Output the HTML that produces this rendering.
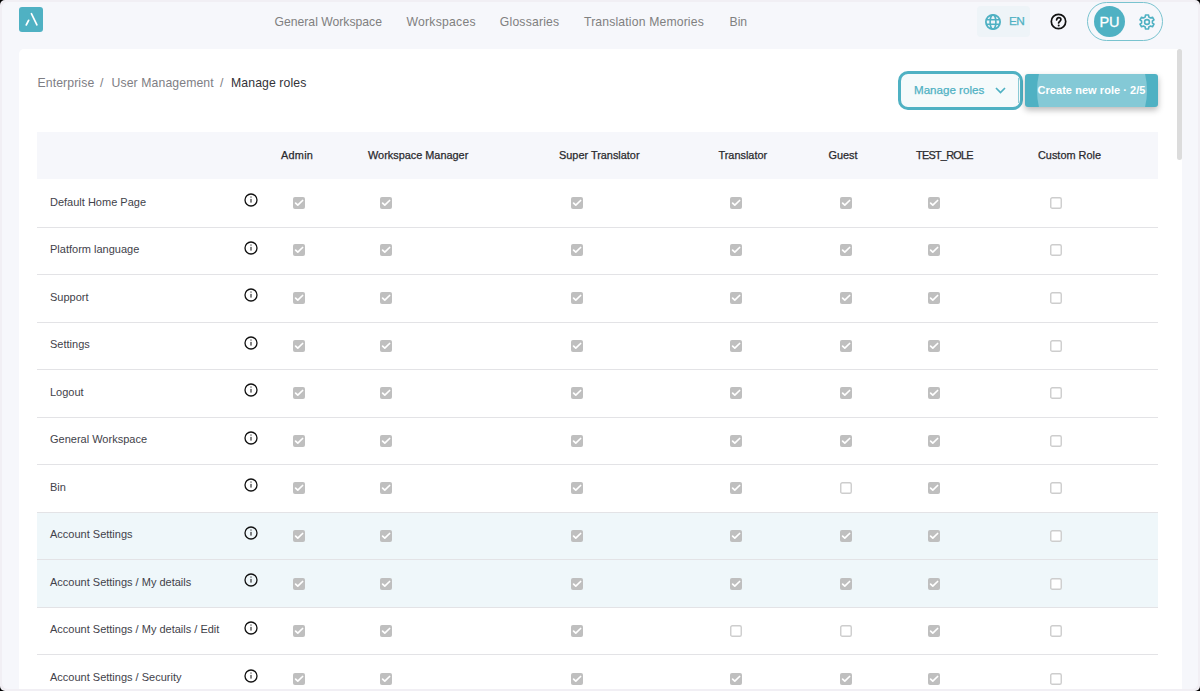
<!DOCTYPE html>
<html><head><meta charset="utf-8"><style>
*{margin:0;padding:0;box-sizing:border-box}
html,body{width:1200px;height:691px;overflow:hidden;background:#000;font-family:"Liberation Sans",sans-serif}
.frame{position:absolute;left:0;top:0;width:1200px;height:691px;border-radius:5px;background:#f1eff4;overflow:hidden}
.inner{position:absolute;left:2px;top:2px;right:2px;bottom:2px;border-radius:6px;background:#f6f7fb}
.abs{position:absolute}
.nav{position:absolute;top:13.7px;font-size:12.2px;color:#808080;white-space:nowrap;line-height:16px}
.card{position:absolute;left:19px;top:49px;width:1163px;height:640px;background:#fff;border-radius:5px 5px 0 0;overflow:hidden}
.bc{position:absolute;top:75px;font-size:12.25px;letter-spacing:0.1px;line-height:16px;white-space:nowrap;color:#7e7e84}
.thead{position:absolute;left:37px;top:132px;width:1121px;height:47px;background:#f6f7fb}
.th{position:absolute;top:148px;font-size:10.9px;line-height:14px;color:#2a2a2e;-webkit-text-stroke:0.25px #2a2a2e;white-space:nowrap}
.hl{position:absolute;left:37px;width:1121px;background:#eff7fa}
.line{position:absolute;left:37px;width:1121px;height:1px;background:#e3e3e6}
.rl{position:absolute;left:50px;font-size:11px;line-height:14px;color:#42424a;white-space:nowrap}
.ic{position:absolute;width:14px;height:14px}
.ic svg,.cb svg{display:block}
.cb{position:absolute;width:12px;height:12px}
</style></head><body>
<div class="frame"><div class="inner"></div></div>
<!-- header -->
<div class="abs" style="left:19px;top:7px;width:24px;height:25px;border-radius:3px;background:#4fb1c3">
<svg width="24" height="25" viewBox="0 0 24 25"><path d="M12.4 6.7 L17.9 17.8" stroke="#fff" stroke-width="1.7" stroke-linecap="round" fill="none"/><path d="M7.3 17.9 L9.6 13.4" stroke="#fff" stroke-width="1.8" stroke-linecap="round" fill="none"/></svg>
</div>
<div class="nav" style="left:274.5px">General Workspace</div>
<div class="nav" style="left:406.5px;letter-spacing:0.25px">Workspaces</div>
<div class="nav" style="left:499.8px;letter-spacing:0.2px">Glossaries</div>
<div class="nav" style="left:584px;letter-spacing:0.16px">Translation Memories</div>
<div class="nav" style="left:729.5px">Bin</div>

<div class="abs" style="left:977px;top:6px;width:53px;height:31px;border-radius:4px;background:#eef4f8"></div>
<svg class="abs" style="left:984px;top:12.5px" width="18" height="18" viewBox="0 0 18 18"><circle cx="9" cy="9" r="7.1" fill="none" stroke="#4fb1c3" stroke-width="1.8"/><ellipse cx="9" cy="9" rx="2.9" ry="7.1" fill="none" stroke="#4fb1c3" stroke-width="1.6"/><path d="M2.2 6.8H15.8M2.2 11.2H15.8" stroke="#4fb1c3" stroke-width="1.6"/></svg>
<div class="abs" style="left:1009px;top:14.3px;font-size:11.8px;line-height:14px;color:#4fb1c3;letter-spacing:-0.5px;-webkit-text-stroke:0.25px #4fb1c3">EN</div>

<svg class="abs" style="left:1050px;top:13px" width="17" height="17" viewBox="0 0 17 17"><circle cx="8.5" cy="8.5" r="7.2" fill="none" stroke="#111" stroke-width="1.7"/><path d="M6.6 6.9 C6.9 5.2 7.8 4.6 8.8 4.6 C10.1 4.6 11.0 5.5 10.9 6.6 C10.8 7.9 9.0 8.6 8.6 10.0" fill="none" stroke="#111" stroke-width="1.7" stroke-linecap="round"/><circle cx="8.7" cy="12.4" r="1" fill="#111"/></svg>

<div class="abs" style="left:1087px;top:2px;width:76px;height:39px;border-radius:20px;border:1px solid #79c3cf"></div>
<div class="abs" style="left:1094px;top:6px;width:31px;height:31px;border-radius:50%;background:#4fb1c3;color:#fff;font-size:14.5px;line-height:33px;text-align:center;-webkit-text-stroke:0.3px #fff">PU</div>
<svg class="abs" style="left:1138px;top:12.6px" width="18" height="18" viewBox="0 0 18 18"><path fill="none" stroke="#4fb1c3" stroke-width="1.6" stroke-linejoin="round" d="M10.79 3.99 L10.54 2.06 L7.46 2.06 L7.21 3.99 L5.38 5.00 L3.51 4.25 L1.98 6.81 L3.59 7.99 L3.59 10.01 L1.98 11.19 L3.51 13.75 L5.38 13.00 L7.21 14.01 L7.46 15.94 L10.54 15.94 L10.79 14.01 L12.62 13.00 L14.49 13.75 L16.02 11.19 L14.41 10.01 L14.41 7.99 L16.02 6.81 L14.49 4.25 L12.62 5.00Z"/><circle cx="9" cy="9" r="2.4" fill="none" stroke="#4fb1c3" stroke-width="1.6"/></svg>

<!-- card -->
<div class="card"></div>
<div class="abs" style="left:1177px;top:49px;width:5px;height:111px;border-radius:3px;background:#dcdcdc"></div>

<div class="bc" style="left:37.5px">Enterprise</div>
<div class="bc" style="left:100px">/</div>
<div class="bc" style="left:111.5px">User Management</div>
<div class="bc" style="left:220px">/</div>
<div class="bc" style="left:231px;color:#333338">Manage roles</div>

<!-- buttons -->
<div class="abs" style="left:898px;top:71px;width:125px;height:39px;border-radius:10px;border:3.8px solid #4fb1c3;background:#f5fafb"></div>
<div class="abs" style="left:1018px;top:78px;width:1px;height:25px;background:#8ccbd6"></div>
<div class="abs" style="left:914px;top:83px;font-size:11.6px;line-height:14px;color:#4fb1c3;-webkit-text-stroke:0.25px #4fb1c3;white-space:nowrap">Manage roles</div>
<svg class="abs" style="left:995px;top:87px" width="11" height="7" viewBox="0 0 11 7"><path d="M1 1 L5.5 5.5 L10 1" fill="none" stroke="#4fb1c3" stroke-width="1.7"/></svg>

<div class="abs" style="left:1025px;top:74px;width:133px;height:33px;border-radius:3px;background:#4fb1c3;overflow:hidden;box-shadow:0 3px 6px rgba(0,0,0,0.28)">
<div class="abs" style="left:11.8px;top:-45px;width:110.5px;height:123px;border-radius:50%;background:#84c9d6"></div>
<div class="abs" style="left:12.5px;top:9px;font-size:11px;line-height:14px;font-weight:bold;letter-spacing:0.05px;color:#fff;white-space:nowrap">Create new role · 2/5</div>
</div>

<div class="thead"></div>
<div class="th" style="left:281px;letter-spacing:0.25px">Admin</div><div class="th" style="left:368px">Workspace Manager</div><div class="th" style="left:559px">Super Translator</div><div class="th" style="left:718.5px">Translator</div><div class="th" style="left:828.5px">Guest</div><div class="th" style="left:916px;letter-spacing:-0.75px">TEST_ROLE</div><div class="th" style="left:1038px">Custom Role</div>
<div class="hl" style="top:511.5px;height:47.5px"></div>
<div class="hl" style="top:559.0px;height:47.5px"></div>
<div class="line" style="top:226.5px"></div>
<div class="rl" style="top:194.8px">Default Home Page</div>
<div class="ic" style="left:244px;top:193.00px"><svg width="14" height="14" viewBox="0 0 14 14"><circle cx="7" cy="7" r="6.0" fill="none" stroke="#111" stroke-width="1.3"/><rect x="6.45" y="3.5" width="1.1" height="1.1" fill="#222"/><rect x="6.45" y="5.9" width="1.1" height="3.7" fill="#222"/></svg></div>
<div class="cb" style="left:292.8px;top:196.90px"><svg width="12" height="12" viewBox="0 0 12 12"><rect x="0" y="0" width="12" height="12" rx="2" fill="#bfbfbf"/><path d="M2.6 6.1 L4.8 8.2 L9.6 3.5" fill="none" stroke="#fff" stroke-width="1.7" stroke-linecap="round" stroke-linejoin="round"/></svg></div>
<div class="cb" style="left:379.8px;top:196.90px"><svg width="12" height="12" viewBox="0 0 12 12"><rect x="0" y="0" width="12" height="12" rx="2" fill="#bfbfbf"/><path d="M2.6 6.1 L4.8 8.2 L9.6 3.5" fill="none" stroke="#fff" stroke-width="1.7" stroke-linecap="round" stroke-linejoin="round"/></svg></div>
<div class="cb" style="left:570.8px;top:196.90px"><svg width="12" height="12" viewBox="0 0 12 12"><rect x="0" y="0" width="12" height="12" rx="2" fill="#bfbfbf"/><path d="M2.6 6.1 L4.8 8.2 L9.6 3.5" fill="none" stroke="#fff" stroke-width="1.7" stroke-linecap="round" stroke-linejoin="round"/></svg></div>
<div class="cb" style="left:730.3px;top:196.90px"><svg width="12" height="12" viewBox="0 0 12 12"><rect x="0" y="0" width="12" height="12" rx="2" fill="#bfbfbf"/><path d="M2.6 6.1 L4.8 8.2 L9.6 3.5" fill="none" stroke="#fff" stroke-width="1.7" stroke-linecap="round" stroke-linejoin="round"/></svg></div>
<div class="cb" style="left:840.3px;top:196.90px"><svg width="12" height="12" viewBox="0 0 12 12"><rect x="0" y="0" width="12" height="12" rx="2" fill="#bfbfbf"/><path d="M2.6 6.1 L4.8 8.2 L9.6 3.5" fill="none" stroke="#fff" stroke-width="1.7" stroke-linecap="round" stroke-linejoin="round"/></svg></div>
<div class="cb" style="left:927.8px;top:196.90px"><svg width="12" height="12" viewBox="0 0 12 12"><rect x="0" y="0" width="12" height="12" rx="2" fill="#bfbfbf"/><path d="M2.6 6.1 L4.8 8.2 L9.6 3.5" fill="none" stroke="#fff" stroke-width="1.7" stroke-linecap="round" stroke-linejoin="round"/></svg></div>
<div class="cb" style="left:1049.8px;top:196.90px"><svg width="12" height="12" viewBox="0 0 12 12"><rect x="0.75" y="0.75" width="10.5" height="10.5" rx="1.6" fill="#fff" stroke="#cdcdcd" stroke-width="1.4"/></svg></div>
<div class="line" style="top:274.0px"></div>
<div class="rl" style="top:242.3px">Platform language</div>
<div class="ic" style="left:244px;top:240.55px"><svg width="14" height="14" viewBox="0 0 14 14"><circle cx="7" cy="7" r="6.0" fill="none" stroke="#111" stroke-width="1.3"/><rect x="6.45" y="3.5" width="1.1" height="1.1" fill="#222"/><rect x="6.45" y="5.9" width="1.1" height="3.7" fill="#222"/></svg></div>
<div class="cb" style="left:292.8px;top:244.48px"><svg width="12" height="12" viewBox="0 0 12 12"><rect x="0" y="0" width="12" height="12" rx="2" fill="#bfbfbf"/><path d="M2.6 6.1 L4.8 8.2 L9.6 3.5" fill="none" stroke="#fff" stroke-width="1.7" stroke-linecap="round" stroke-linejoin="round"/></svg></div>
<div class="cb" style="left:379.8px;top:244.48px"><svg width="12" height="12" viewBox="0 0 12 12"><rect x="0" y="0" width="12" height="12" rx="2" fill="#bfbfbf"/><path d="M2.6 6.1 L4.8 8.2 L9.6 3.5" fill="none" stroke="#fff" stroke-width="1.7" stroke-linecap="round" stroke-linejoin="round"/></svg></div>
<div class="cb" style="left:570.8px;top:244.48px"><svg width="12" height="12" viewBox="0 0 12 12"><rect x="0" y="0" width="12" height="12" rx="2" fill="#bfbfbf"/><path d="M2.6 6.1 L4.8 8.2 L9.6 3.5" fill="none" stroke="#fff" stroke-width="1.7" stroke-linecap="round" stroke-linejoin="round"/></svg></div>
<div class="cb" style="left:730.3px;top:244.48px"><svg width="12" height="12" viewBox="0 0 12 12"><rect x="0" y="0" width="12" height="12" rx="2" fill="#bfbfbf"/><path d="M2.6 6.1 L4.8 8.2 L9.6 3.5" fill="none" stroke="#fff" stroke-width="1.7" stroke-linecap="round" stroke-linejoin="round"/></svg></div>
<div class="cb" style="left:840.3px;top:244.48px"><svg width="12" height="12" viewBox="0 0 12 12"><rect x="0" y="0" width="12" height="12" rx="2" fill="#bfbfbf"/><path d="M2.6 6.1 L4.8 8.2 L9.6 3.5" fill="none" stroke="#fff" stroke-width="1.7" stroke-linecap="round" stroke-linejoin="round"/></svg></div>
<div class="cb" style="left:927.8px;top:244.48px"><svg width="12" height="12" viewBox="0 0 12 12"><rect x="0" y="0" width="12" height="12" rx="2" fill="#bfbfbf"/><path d="M2.6 6.1 L4.8 8.2 L9.6 3.5" fill="none" stroke="#fff" stroke-width="1.7" stroke-linecap="round" stroke-linejoin="round"/></svg></div>
<div class="cb" style="left:1049.8px;top:244.48px"><svg width="12" height="12" viewBox="0 0 12 12"><rect x="0.75" y="0.75" width="10.5" height="10.5" rx="1.6" fill="#fff" stroke="#cdcdcd" stroke-width="1.4"/></svg></div>
<div class="line" style="top:321.5px"></div>
<div class="rl" style="top:289.8px">Support</div>
<div class="ic" style="left:244px;top:288.10px"><svg width="14" height="14" viewBox="0 0 14 14"><circle cx="7" cy="7" r="6.0" fill="none" stroke="#111" stroke-width="1.3"/><rect x="6.45" y="3.5" width="1.1" height="1.1" fill="#222"/><rect x="6.45" y="5.9" width="1.1" height="3.7" fill="#222"/></svg></div>
<div class="cb" style="left:292.8px;top:292.06px"><svg width="12" height="12" viewBox="0 0 12 12"><rect x="0" y="0" width="12" height="12" rx="2" fill="#bfbfbf"/><path d="M2.6 6.1 L4.8 8.2 L9.6 3.5" fill="none" stroke="#fff" stroke-width="1.7" stroke-linecap="round" stroke-linejoin="round"/></svg></div>
<div class="cb" style="left:379.8px;top:292.06px"><svg width="12" height="12" viewBox="0 0 12 12"><rect x="0" y="0" width="12" height="12" rx="2" fill="#bfbfbf"/><path d="M2.6 6.1 L4.8 8.2 L9.6 3.5" fill="none" stroke="#fff" stroke-width="1.7" stroke-linecap="round" stroke-linejoin="round"/></svg></div>
<div class="cb" style="left:570.8px;top:292.06px"><svg width="12" height="12" viewBox="0 0 12 12"><rect x="0" y="0" width="12" height="12" rx="2" fill="#bfbfbf"/><path d="M2.6 6.1 L4.8 8.2 L9.6 3.5" fill="none" stroke="#fff" stroke-width="1.7" stroke-linecap="round" stroke-linejoin="round"/></svg></div>
<div class="cb" style="left:730.3px;top:292.06px"><svg width="12" height="12" viewBox="0 0 12 12"><rect x="0" y="0" width="12" height="12" rx="2" fill="#bfbfbf"/><path d="M2.6 6.1 L4.8 8.2 L9.6 3.5" fill="none" stroke="#fff" stroke-width="1.7" stroke-linecap="round" stroke-linejoin="round"/></svg></div>
<div class="cb" style="left:840.3px;top:292.06px"><svg width="12" height="12" viewBox="0 0 12 12"><rect x="0" y="0" width="12" height="12" rx="2" fill="#bfbfbf"/><path d="M2.6 6.1 L4.8 8.2 L9.6 3.5" fill="none" stroke="#fff" stroke-width="1.7" stroke-linecap="round" stroke-linejoin="round"/></svg></div>
<div class="cb" style="left:927.8px;top:292.06px"><svg width="12" height="12" viewBox="0 0 12 12"><rect x="0" y="0" width="12" height="12" rx="2" fill="#bfbfbf"/><path d="M2.6 6.1 L4.8 8.2 L9.6 3.5" fill="none" stroke="#fff" stroke-width="1.7" stroke-linecap="round" stroke-linejoin="round"/></svg></div>
<div class="cb" style="left:1049.8px;top:292.06px"><svg width="12" height="12" viewBox="0 0 12 12"><rect x="0.75" y="0.75" width="10.5" height="10.5" rx="1.6" fill="#fff" stroke="#cdcdcd" stroke-width="1.4"/></svg></div>
<div class="line" style="top:369.0px"></div>
<div class="rl" style="top:337.3px">Settings</div>
<div class="ic" style="left:244px;top:335.65px"><svg width="14" height="14" viewBox="0 0 14 14"><circle cx="7" cy="7" r="6.0" fill="none" stroke="#111" stroke-width="1.3"/><rect x="6.45" y="3.5" width="1.1" height="1.1" fill="#222"/><rect x="6.45" y="5.9" width="1.1" height="3.7" fill="#222"/></svg></div>
<div class="cb" style="left:292.8px;top:339.64px"><svg width="12" height="12" viewBox="0 0 12 12"><rect x="0" y="0" width="12" height="12" rx="2" fill="#bfbfbf"/><path d="M2.6 6.1 L4.8 8.2 L9.6 3.5" fill="none" stroke="#fff" stroke-width="1.7" stroke-linecap="round" stroke-linejoin="round"/></svg></div>
<div class="cb" style="left:379.8px;top:339.64px"><svg width="12" height="12" viewBox="0 0 12 12"><rect x="0" y="0" width="12" height="12" rx="2" fill="#bfbfbf"/><path d="M2.6 6.1 L4.8 8.2 L9.6 3.5" fill="none" stroke="#fff" stroke-width="1.7" stroke-linecap="round" stroke-linejoin="round"/></svg></div>
<div class="cb" style="left:570.8px;top:339.64px"><svg width="12" height="12" viewBox="0 0 12 12"><rect x="0" y="0" width="12" height="12" rx="2" fill="#bfbfbf"/><path d="M2.6 6.1 L4.8 8.2 L9.6 3.5" fill="none" stroke="#fff" stroke-width="1.7" stroke-linecap="round" stroke-linejoin="round"/></svg></div>
<div class="cb" style="left:730.3px;top:339.64px"><svg width="12" height="12" viewBox="0 0 12 12"><rect x="0" y="0" width="12" height="12" rx="2" fill="#bfbfbf"/><path d="M2.6 6.1 L4.8 8.2 L9.6 3.5" fill="none" stroke="#fff" stroke-width="1.7" stroke-linecap="round" stroke-linejoin="round"/></svg></div>
<div class="cb" style="left:840.3px;top:339.64px"><svg width="12" height="12" viewBox="0 0 12 12"><rect x="0" y="0" width="12" height="12" rx="2" fill="#bfbfbf"/><path d="M2.6 6.1 L4.8 8.2 L9.6 3.5" fill="none" stroke="#fff" stroke-width="1.7" stroke-linecap="round" stroke-linejoin="round"/></svg></div>
<div class="cb" style="left:927.8px;top:339.64px"><svg width="12" height="12" viewBox="0 0 12 12"><rect x="0" y="0" width="12" height="12" rx="2" fill="#bfbfbf"/><path d="M2.6 6.1 L4.8 8.2 L9.6 3.5" fill="none" stroke="#fff" stroke-width="1.7" stroke-linecap="round" stroke-linejoin="round"/></svg></div>
<div class="cb" style="left:1049.8px;top:339.64px"><svg width="12" height="12" viewBox="0 0 12 12"><rect x="0.75" y="0.75" width="10.5" height="10.5" rx="1.6" fill="#fff" stroke="#cdcdcd" stroke-width="1.4"/></svg></div>
<div class="line" style="top:416.5px"></div>
<div class="rl" style="top:384.8px">Logout</div>
<div class="ic" style="left:244px;top:383.20px"><svg width="14" height="14" viewBox="0 0 14 14"><circle cx="7" cy="7" r="6.0" fill="none" stroke="#111" stroke-width="1.3"/><rect x="6.45" y="3.5" width="1.1" height="1.1" fill="#222"/><rect x="6.45" y="5.9" width="1.1" height="3.7" fill="#222"/></svg></div>
<div class="cb" style="left:292.8px;top:387.22px"><svg width="12" height="12" viewBox="0 0 12 12"><rect x="0" y="0" width="12" height="12" rx="2" fill="#bfbfbf"/><path d="M2.6 6.1 L4.8 8.2 L9.6 3.5" fill="none" stroke="#fff" stroke-width="1.7" stroke-linecap="round" stroke-linejoin="round"/></svg></div>
<div class="cb" style="left:379.8px;top:387.22px"><svg width="12" height="12" viewBox="0 0 12 12"><rect x="0" y="0" width="12" height="12" rx="2" fill="#bfbfbf"/><path d="M2.6 6.1 L4.8 8.2 L9.6 3.5" fill="none" stroke="#fff" stroke-width="1.7" stroke-linecap="round" stroke-linejoin="round"/></svg></div>
<div class="cb" style="left:570.8px;top:387.22px"><svg width="12" height="12" viewBox="0 0 12 12"><rect x="0" y="0" width="12" height="12" rx="2" fill="#bfbfbf"/><path d="M2.6 6.1 L4.8 8.2 L9.6 3.5" fill="none" stroke="#fff" stroke-width="1.7" stroke-linecap="round" stroke-linejoin="round"/></svg></div>
<div class="cb" style="left:730.3px;top:387.22px"><svg width="12" height="12" viewBox="0 0 12 12"><rect x="0" y="0" width="12" height="12" rx="2" fill="#bfbfbf"/><path d="M2.6 6.1 L4.8 8.2 L9.6 3.5" fill="none" stroke="#fff" stroke-width="1.7" stroke-linecap="round" stroke-linejoin="round"/></svg></div>
<div class="cb" style="left:840.3px;top:387.22px"><svg width="12" height="12" viewBox="0 0 12 12"><rect x="0" y="0" width="12" height="12" rx="2" fill="#bfbfbf"/><path d="M2.6 6.1 L4.8 8.2 L9.6 3.5" fill="none" stroke="#fff" stroke-width="1.7" stroke-linecap="round" stroke-linejoin="round"/></svg></div>
<div class="cb" style="left:927.8px;top:387.22px"><svg width="12" height="12" viewBox="0 0 12 12"><rect x="0" y="0" width="12" height="12" rx="2" fill="#bfbfbf"/><path d="M2.6 6.1 L4.8 8.2 L9.6 3.5" fill="none" stroke="#fff" stroke-width="1.7" stroke-linecap="round" stroke-linejoin="round"/></svg></div>
<div class="cb" style="left:1049.8px;top:387.22px"><svg width="12" height="12" viewBox="0 0 12 12"><rect x="0.75" y="0.75" width="10.5" height="10.5" rx="1.6" fill="#fff" stroke="#cdcdcd" stroke-width="1.4"/></svg></div>
<div class="line" style="top:464.0px"></div>
<div class="rl" style="top:432.3px">General Workspace</div>
<div class="ic" style="left:244px;top:430.75px"><svg width="14" height="14" viewBox="0 0 14 14"><circle cx="7" cy="7" r="6.0" fill="none" stroke="#111" stroke-width="1.3"/><rect x="6.45" y="3.5" width="1.1" height="1.1" fill="#222"/><rect x="6.45" y="5.9" width="1.1" height="3.7" fill="#222"/></svg></div>
<div class="cb" style="left:292.8px;top:434.80px"><svg width="12" height="12" viewBox="0 0 12 12"><rect x="0" y="0" width="12" height="12" rx="2" fill="#bfbfbf"/><path d="M2.6 6.1 L4.8 8.2 L9.6 3.5" fill="none" stroke="#fff" stroke-width="1.7" stroke-linecap="round" stroke-linejoin="round"/></svg></div>
<div class="cb" style="left:379.8px;top:434.80px"><svg width="12" height="12" viewBox="0 0 12 12"><rect x="0" y="0" width="12" height="12" rx="2" fill="#bfbfbf"/><path d="M2.6 6.1 L4.8 8.2 L9.6 3.5" fill="none" stroke="#fff" stroke-width="1.7" stroke-linecap="round" stroke-linejoin="round"/></svg></div>
<div class="cb" style="left:570.8px;top:434.80px"><svg width="12" height="12" viewBox="0 0 12 12"><rect x="0" y="0" width="12" height="12" rx="2" fill="#bfbfbf"/><path d="M2.6 6.1 L4.8 8.2 L9.6 3.5" fill="none" stroke="#fff" stroke-width="1.7" stroke-linecap="round" stroke-linejoin="round"/></svg></div>
<div class="cb" style="left:730.3px;top:434.80px"><svg width="12" height="12" viewBox="0 0 12 12"><rect x="0" y="0" width="12" height="12" rx="2" fill="#bfbfbf"/><path d="M2.6 6.1 L4.8 8.2 L9.6 3.5" fill="none" stroke="#fff" stroke-width="1.7" stroke-linecap="round" stroke-linejoin="round"/></svg></div>
<div class="cb" style="left:840.3px;top:434.80px"><svg width="12" height="12" viewBox="0 0 12 12"><rect x="0" y="0" width="12" height="12" rx="2" fill="#bfbfbf"/><path d="M2.6 6.1 L4.8 8.2 L9.6 3.5" fill="none" stroke="#fff" stroke-width="1.7" stroke-linecap="round" stroke-linejoin="round"/></svg></div>
<div class="cb" style="left:927.8px;top:434.80px"><svg width="12" height="12" viewBox="0 0 12 12"><rect x="0" y="0" width="12" height="12" rx="2" fill="#bfbfbf"/><path d="M2.6 6.1 L4.8 8.2 L9.6 3.5" fill="none" stroke="#fff" stroke-width="1.7" stroke-linecap="round" stroke-linejoin="round"/></svg></div>
<div class="cb" style="left:1049.8px;top:434.80px"><svg width="12" height="12" viewBox="0 0 12 12"><rect x="0.75" y="0.75" width="10.5" height="10.5" rx="1.6" fill="#fff" stroke="#cdcdcd" stroke-width="1.4"/></svg></div>
<div class="line" style="top:511.5px"></div>
<div class="rl" style="top:479.8px">Bin</div>
<div class="ic" style="left:244px;top:478.30px"><svg width="14" height="14" viewBox="0 0 14 14"><circle cx="7" cy="7" r="6.0" fill="none" stroke="#111" stroke-width="1.3"/><rect x="6.45" y="3.5" width="1.1" height="1.1" fill="#222"/><rect x="6.45" y="5.9" width="1.1" height="3.7" fill="#222"/></svg></div>
<div class="cb" style="left:292.8px;top:482.38px"><svg width="12" height="12" viewBox="0 0 12 12"><rect x="0" y="0" width="12" height="12" rx="2" fill="#bfbfbf"/><path d="M2.6 6.1 L4.8 8.2 L9.6 3.5" fill="none" stroke="#fff" stroke-width="1.7" stroke-linecap="round" stroke-linejoin="round"/></svg></div>
<div class="cb" style="left:379.8px;top:482.38px"><svg width="12" height="12" viewBox="0 0 12 12"><rect x="0" y="0" width="12" height="12" rx="2" fill="#bfbfbf"/><path d="M2.6 6.1 L4.8 8.2 L9.6 3.5" fill="none" stroke="#fff" stroke-width="1.7" stroke-linecap="round" stroke-linejoin="round"/></svg></div>
<div class="cb" style="left:570.8px;top:482.38px"><svg width="12" height="12" viewBox="0 0 12 12"><rect x="0" y="0" width="12" height="12" rx="2" fill="#bfbfbf"/><path d="M2.6 6.1 L4.8 8.2 L9.6 3.5" fill="none" stroke="#fff" stroke-width="1.7" stroke-linecap="round" stroke-linejoin="round"/></svg></div>
<div class="cb" style="left:730.3px;top:482.38px"><svg width="12" height="12" viewBox="0 0 12 12"><rect x="0" y="0" width="12" height="12" rx="2" fill="#bfbfbf"/><path d="M2.6 6.1 L4.8 8.2 L9.6 3.5" fill="none" stroke="#fff" stroke-width="1.7" stroke-linecap="round" stroke-linejoin="round"/></svg></div>
<div class="cb" style="left:840.3px;top:482.38px"><svg width="12" height="12" viewBox="0 0 12 12"><rect x="0.75" y="0.75" width="10.5" height="10.5" rx="1.6" fill="#fff" stroke="#cdcdcd" stroke-width="1.4"/></svg></div>
<div class="cb" style="left:927.8px;top:482.38px"><svg width="12" height="12" viewBox="0 0 12 12"><rect x="0" y="0" width="12" height="12" rx="2" fill="#bfbfbf"/><path d="M2.6 6.1 L4.8 8.2 L9.6 3.5" fill="none" stroke="#fff" stroke-width="1.7" stroke-linecap="round" stroke-linejoin="round"/></svg></div>
<div class="cb" style="left:1049.8px;top:482.38px"><svg width="12" height="12" viewBox="0 0 12 12"><rect x="0.75" y="0.75" width="10.5" height="10.5" rx="1.6" fill="#fff" stroke="#cdcdcd" stroke-width="1.4"/></svg></div>
<div class="line" style="top:559.0px"></div>
<div class="rl" style="top:527.3px">Account Settings</div>
<div class="ic" style="left:244px;top:525.85px"><svg width="14" height="14" viewBox="0 0 14 14"><circle cx="7" cy="7" r="6.0" fill="none" stroke="#111" stroke-width="1.3"/><rect x="6.45" y="3.5" width="1.1" height="1.1" fill="#222"/><rect x="6.45" y="5.9" width="1.1" height="3.7" fill="#222"/></svg></div>
<div class="cb" style="left:292.8px;top:529.96px"><svg width="12" height="12" viewBox="0 0 12 12"><rect x="0" y="0" width="12" height="12" rx="2" fill="#bfbfbf"/><path d="M2.6 6.1 L4.8 8.2 L9.6 3.5" fill="none" stroke="#fff" stroke-width="1.7" stroke-linecap="round" stroke-linejoin="round"/></svg></div>
<div class="cb" style="left:379.8px;top:529.96px"><svg width="12" height="12" viewBox="0 0 12 12"><rect x="0" y="0" width="12" height="12" rx="2" fill="#bfbfbf"/><path d="M2.6 6.1 L4.8 8.2 L9.6 3.5" fill="none" stroke="#fff" stroke-width="1.7" stroke-linecap="round" stroke-linejoin="round"/></svg></div>
<div class="cb" style="left:570.8px;top:529.96px"><svg width="12" height="12" viewBox="0 0 12 12"><rect x="0" y="0" width="12" height="12" rx="2" fill="#bfbfbf"/><path d="M2.6 6.1 L4.8 8.2 L9.6 3.5" fill="none" stroke="#fff" stroke-width="1.7" stroke-linecap="round" stroke-linejoin="round"/></svg></div>
<div class="cb" style="left:730.3px;top:529.96px"><svg width="12" height="12" viewBox="0 0 12 12"><rect x="0" y="0" width="12" height="12" rx="2" fill="#bfbfbf"/><path d="M2.6 6.1 L4.8 8.2 L9.6 3.5" fill="none" stroke="#fff" stroke-width="1.7" stroke-linecap="round" stroke-linejoin="round"/></svg></div>
<div class="cb" style="left:840.3px;top:529.96px"><svg width="12" height="12" viewBox="0 0 12 12"><rect x="0" y="0" width="12" height="12" rx="2" fill="#bfbfbf"/><path d="M2.6 6.1 L4.8 8.2 L9.6 3.5" fill="none" stroke="#fff" stroke-width="1.7" stroke-linecap="round" stroke-linejoin="round"/></svg></div>
<div class="cb" style="left:927.8px;top:529.96px"><svg width="12" height="12" viewBox="0 0 12 12"><rect x="0" y="0" width="12" height="12" rx="2" fill="#bfbfbf"/><path d="M2.6 6.1 L4.8 8.2 L9.6 3.5" fill="none" stroke="#fff" stroke-width="1.7" stroke-linecap="round" stroke-linejoin="round"/></svg></div>
<div class="cb" style="left:1049.8px;top:529.96px"><svg width="12" height="12" viewBox="0 0 12 12"><rect x="0.75" y="0.75" width="10.5" height="10.5" rx="1.6" fill="#fff" stroke="#cdcdcd" stroke-width="1.4"/></svg></div>
<div class="line" style="top:606.5px"></div>
<div class="rl" style="top:574.8px">Account Settings / My details</div>
<div class="ic" style="left:244px;top:573.40px"><svg width="14" height="14" viewBox="0 0 14 14"><circle cx="7" cy="7" r="6.0" fill="none" stroke="#111" stroke-width="1.3"/><rect x="6.45" y="3.5" width="1.1" height="1.1" fill="#222"/><rect x="6.45" y="5.9" width="1.1" height="3.7" fill="#222"/></svg></div>
<div class="cb" style="left:292.8px;top:577.54px"><svg width="12" height="12" viewBox="0 0 12 12"><rect x="0" y="0" width="12" height="12" rx="2" fill="#bfbfbf"/><path d="M2.6 6.1 L4.8 8.2 L9.6 3.5" fill="none" stroke="#fff" stroke-width="1.7" stroke-linecap="round" stroke-linejoin="round"/></svg></div>
<div class="cb" style="left:379.8px;top:577.54px"><svg width="12" height="12" viewBox="0 0 12 12"><rect x="0" y="0" width="12" height="12" rx="2" fill="#bfbfbf"/><path d="M2.6 6.1 L4.8 8.2 L9.6 3.5" fill="none" stroke="#fff" stroke-width="1.7" stroke-linecap="round" stroke-linejoin="round"/></svg></div>
<div class="cb" style="left:570.8px;top:577.54px"><svg width="12" height="12" viewBox="0 0 12 12"><rect x="0" y="0" width="12" height="12" rx="2" fill="#bfbfbf"/><path d="M2.6 6.1 L4.8 8.2 L9.6 3.5" fill="none" stroke="#fff" stroke-width="1.7" stroke-linecap="round" stroke-linejoin="round"/></svg></div>
<div class="cb" style="left:730.3px;top:577.54px"><svg width="12" height="12" viewBox="0 0 12 12"><rect x="0" y="0" width="12" height="12" rx="2" fill="#bfbfbf"/><path d="M2.6 6.1 L4.8 8.2 L9.6 3.5" fill="none" stroke="#fff" stroke-width="1.7" stroke-linecap="round" stroke-linejoin="round"/></svg></div>
<div class="cb" style="left:840.3px;top:577.54px"><svg width="12" height="12" viewBox="0 0 12 12"><rect x="0" y="0" width="12" height="12" rx="2" fill="#bfbfbf"/><path d="M2.6 6.1 L4.8 8.2 L9.6 3.5" fill="none" stroke="#fff" stroke-width="1.7" stroke-linecap="round" stroke-linejoin="round"/></svg></div>
<div class="cb" style="left:927.8px;top:577.54px"><svg width="12" height="12" viewBox="0 0 12 12"><rect x="0" y="0" width="12" height="12" rx="2" fill="#bfbfbf"/><path d="M2.6 6.1 L4.8 8.2 L9.6 3.5" fill="none" stroke="#fff" stroke-width="1.7" stroke-linecap="round" stroke-linejoin="round"/></svg></div>
<div class="cb" style="left:1049.8px;top:577.54px"><svg width="12" height="12" viewBox="0 0 12 12"><rect x="0.75" y="0.75" width="10.5" height="10.5" rx="1.6" fill="#fff" stroke="#cdcdcd" stroke-width="1.4"/></svg></div>
<div class="line" style="top:654.0px"></div>
<div class="rl" style="top:622.3px">Account Settings / My details / Edit</div>
<div class="ic" style="left:244px;top:620.95px"><svg width="14" height="14" viewBox="0 0 14 14"><circle cx="7" cy="7" r="6.0" fill="none" stroke="#111" stroke-width="1.3"/><rect x="6.45" y="3.5" width="1.1" height="1.1" fill="#222"/><rect x="6.45" y="5.9" width="1.1" height="3.7" fill="#222"/></svg></div>
<div class="cb" style="left:292.8px;top:625.12px"><svg width="12" height="12" viewBox="0 0 12 12"><rect x="0" y="0" width="12" height="12" rx="2" fill="#bfbfbf"/><path d="M2.6 6.1 L4.8 8.2 L9.6 3.5" fill="none" stroke="#fff" stroke-width="1.7" stroke-linecap="round" stroke-linejoin="round"/></svg></div>
<div class="cb" style="left:379.8px;top:625.12px"><svg width="12" height="12" viewBox="0 0 12 12"><rect x="0" y="0" width="12" height="12" rx="2" fill="#bfbfbf"/><path d="M2.6 6.1 L4.8 8.2 L9.6 3.5" fill="none" stroke="#fff" stroke-width="1.7" stroke-linecap="round" stroke-linejoin="round"/></svg></div>
<div class="cb" style="left:570.8px;top:625.12px"><svg width="12" height="12" viewBox="0 0 12 12"><rect x="0" y="0" width="12" height="12" rx="2" fill="#bfbfbf"/><path d="M2.6 6.1 L4.8 8.2 L9.6 3.5" fill="none" stroke="#fff" stroke-width="1.7" stroke-linecap="round" stroke-linejoin="round"/></svg></div>
<div class="cb" style="left:730.3px;top:625.12px"><svg width="12" height="12" viewBox="0 0 12 12"><rect x="0.75" y="0.75" width="10.5" height="10.5" rx="1.6" fill="#fff" stroke="#cdcdcd" stroke-width="1.4"/></svg></div>
<div class="cb" style="left:840.3px;top:625.12px"><svg width="12" height="12" viewBox="0 0 12 12"><rect x="0.75" y="0.75" width="10.5" height="10.5" rx="1.6" fill="#fff" stroke="#cdcdcd" stroke-width="1.4"/></svg></div>
<div class="cb" style="left:927.8px;top:625.12px"><svg width="12" height="12" viewBox="0 0 12 12"><rect x="0" y="0" width="12" height="12" rx="2" fill="#bfbfbf"/><path d="M2.6 6.1 L4.8 8.2 L9.6 3.5" fill="none" stroke="#fff" stroke-width="1.7" stroke-linecap="round" stroke-linejoin="round"/></svg></div>
<div class="cb" style="left:1049.8px;top:625.12px"><svg width="12" height="12" viewBox="0 0 12 12"><rect x="0.75" y="0.75" width="10.5" height="10.5" rx="1.6" fill="#fff" stroke="#cdcdcd" stroke-width="1.4"/></svg></div>
<div class="line" style="top:701.5px"></div>
<div class="rl" style="top:669.8px">Account Settings / Security</div>
<div class="ic" style="left:244px;top:668.50px"><svg width="14" height="14" viewBox="0 0 14 14"><circle cx="7" cy="7" r="6.0" fill="none" stroke="#111" stroke-width="1.3"/><rect x="6.45" y="3.5" width="1.1" height="1.1" fill="#222"/><rect x="6.45" y="5.9" width="1.1" height="3.7" fill="#222"/></svg></div>
<div class="cb" style="left:292.8px;top:672.70px"><svg width="12" height="12" viewBox="0 0 12 12"><rect x="0" y="0" width="12" height="12" rx="2" fill="#bfbfbf"/><path d="M2.6 6.1 L4.8 8.2 L9.6 3.5" fill="none" stroke="#fff" stroke-width="1.7" stroke-linecap="round" stroke-linejoin="round"/></svg></div>
<div class="cb" style="left:379.8px;top:672.70px"><svg width="12" height="12" viewBox="0 0 12 12"><rect x="0" y="0" width="12" height="12" rx="2" fill="#bfbfbf"/><path d="M2.6 6.1 L4.8 8.2 L9.6 3.5" fill="none" stroke="#fff" stroke-width="1.7" stroke-linecap="round" stroke-linejoin="round"/></svg></div>
<div class="cb" style="left:570.8px;top:672.70px"><svg width="12" height="12" viewBox="0 0 12 12"><rect x="0" y="0" width="12" height="12" rx="2" fill="#bfbfbf"/><path d="M2.6 6.1 L4.8 8.2 L9.6 3.5" fill="none" stroke="#fff" stroke-width="1.7" stroke-linecap="round" stroke-linejoin="round"/></svg></div>
<div class="cb" style="left:730.3px;top:672.70px"><svg width="12" height="12" viewBox="0 0 12 12"><rect x="0" y="0" width="12" height="12" rx="2" fill="#bfbfbf"/><path d="M2.6 6.1 L4.8 8.2 L9.6 3.5" fill="none" stroke="#fff" stroke-width="1.7" stroke-linecap="round" stroke-linejoin="round"/></svg></div>
<div class="cb" style="left:840.3px;top:672.70px"><svg width="12" height="12" viewBox="0 0 12 12"><rect x="0" y="0" width="12" height="12" rx="2" fill="#bfbfbf"/><path d="M2.6 6.1 L4.8 8.2 L9.6 3.5" fill="none" stroke="#fff" stroke-width="1.7" stroke-linecap="round" stroke-linejoin="round"/></svg></div>
<div class="cb" style="left:927.8px;top:672.70px"><svg width="12" height="12" viewBox="0 0 12 12"><rect x="0" y="0" width="12" height="12" rx="2" fill="#bfbfbf"/><path d="M2.6 6.1 L4.8 8.2 L9.6 3.5" fill="none" stroke="#fff" stroke-width="1.7" stroke-linecap="round" stroke-linejoin="round"/></svg></div>
<div class="cb" style="left:1049.8px;top:672.70px"><svg width="12" height="12" viewBox="0 0 12 12"><rect x="0.75" y="0.75" width="10.5" height="10.5" rx="1.6" fill="#fff" stroke="#cdcdcd" stroke-width="1.4"/></svg></div>
</body></html>
